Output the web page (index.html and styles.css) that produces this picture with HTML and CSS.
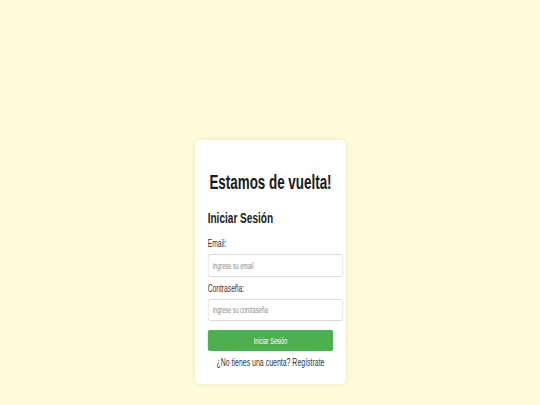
FILE: index.html
```html
<!DOCTYPE html>
<html lang="es">
<head>
<meta charset="utf-8">
<title>Iniciar Sesión</title>
<link rel="stylesheet" href="styles.css">
</head>
<body>
<main class="page">
  <section class="card">
    <h1 class="title">Estamos de vuelta!</h1>
    <h2 class="subtitle">Iniciar Sesión</h2>
    <form class="form">
      <div class="field">
        <label class="label" for="email">Email:</label>
        <input class="input" id="email" type="email" placeholder="Ingrese su email">
      </div>
      <div class="field">
        <label class="label" for="password">Contraseña:</label>
        <input class="input" id="password" type="password" placeholder="Ingrese su contraseña">
      </div>
      <button class="button" type="button">Iniciar Sesión</button>
    </form>
    <p class="footer">¿No tienes una cuenta? <a class="link" href="#">Regístrate</a></p>
  </section>
</main>
</body>
</html>
```

FILE: styles.css
```css
html, body {
  margin: 0;
  padding: 0;
}

body {
  background: #fffcd9;
  font-family: "Liberation Sans", Arial, sans-serif;
  color: #222;
}

.page {
  min-height: 100vh;
  box-sizing: border-box;
  padding: 140px 0 20px;
  display: flex;
  align-items: flex-start;
  justify-content: center;
}

.card {
  width: 225px;
  box-sizing: border-box;
  padding: 18px 18.75px 16.5px;
  background: #ffffff;
  border-radius: 7px / 5px;
  box-shadow: 0 0 7px rgba(0, 0, 0, 0.1);
  transform: scaleX(0.67);
}

.title {
  margin: 13.4px 0;
  font-size: 20px;
  font-weight: bold;
  text-align: center;
  color: #1a1a1a;
}

.subtitle {
  margin: 14.6px 0 12.45px;
  font-size: 15px;
  font-weight: bold;
  color: #1a1a1a;
}

.form {
  display: flex;
  flex-direction: column;
}

.field {
  display: flex;
  flex-direction: column;
  margin-bottom: 6.2px;
}

.label {
  display: block;
  margin-bottom: 5px;
  font-size: 10px;
  color: #333;
}

.input {
  width: 100%;
  box-sizing: content-box;
  margin: 0;
  padding: 5.2px 6.25px;
  border: 1px solid #dcdcdc;
  border-radius: 4px / 3px;
  font-family: "Liberation Sans", Arial, sans-serif;
  font-size: 8.33px;
  line-height: normal;
  color: #222;
  background: #fff;
  outline: none;
}

.input::placeholder {
  color: #8a8a8a;
}

.button {
  width: 100%;
  margin-top: 2.5px;
  padding: 5.7px 0;
  border: none;
  border-radius: 3px / 2px;
  background: #4caf50;
  color: #ffffff;
  font-family: "Liberation Sans", Arial, sans-serif;
  font-size: 8.33px;
  line-height: normal;
}

.footer {
  margin: 5.5px 0 0;
  font-size: 10.4px;
  text-align: center;
  color: #333;
}

.link {
  color: inherit;
  text-decoration: none;
}
```
